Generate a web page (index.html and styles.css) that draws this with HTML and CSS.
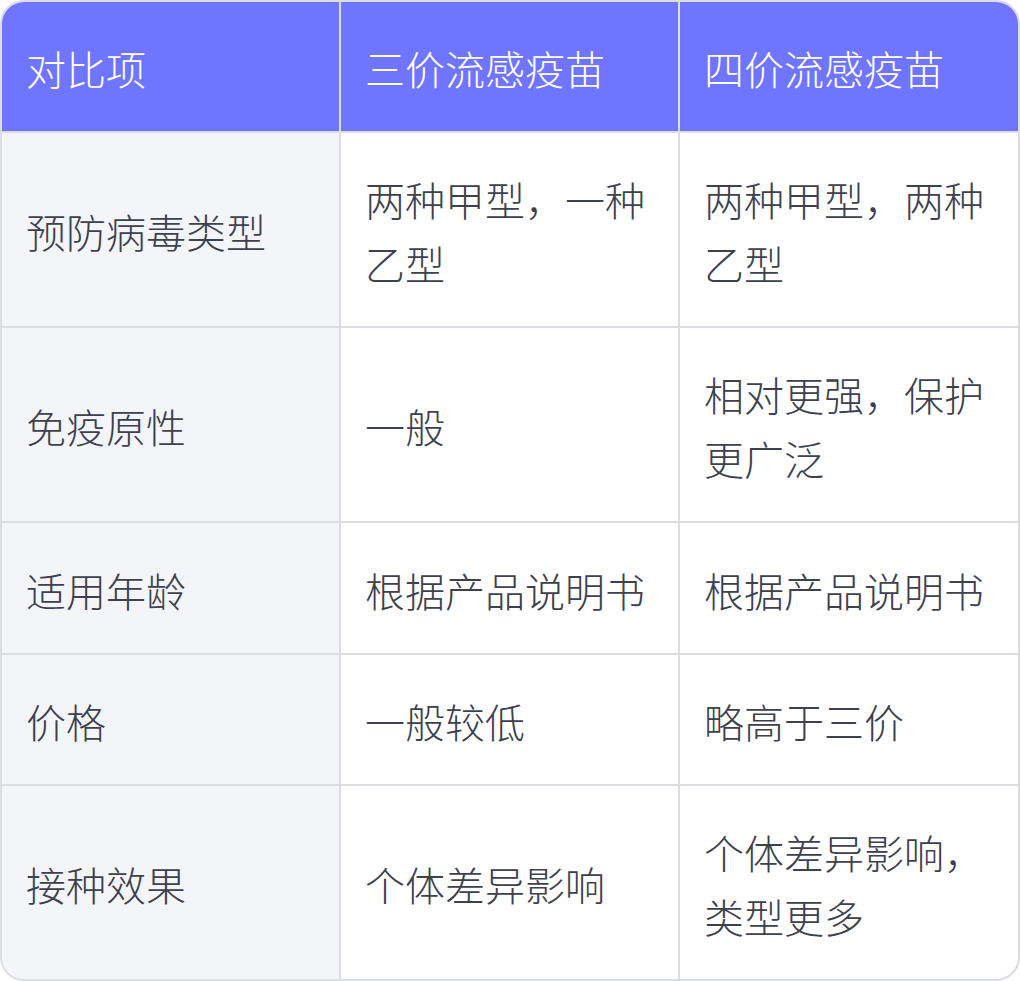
FILE: index.html
```html
<!DOCTYPE html>
<html lang="zh-CN">
<head>
<meta charset="utf-8">
<link rel="stylesheet" href="styles.css">
</head>
<body>
<div class="card">
  <table class="cmp">
    <thead>
      <tr><th>对比项</th><th>三价流感疫苗</th><th>四价流感疫苗</th></tr>
    </thead>
    <tbody>
      <tr><td>预防病毒类型</td><td>两种甲型，一种乙型</td><td>两种甲型，两种乙型</td></tr>
      <tr><td>免疫原性</td><td>一般</td><td>相对更强，保护更广泛</td></tr>
      <tr><td>适用年龄</td><td>根据产品说明书</td><td>根据产品说明书</td></tr>
      <tr><td>价格</td><td>一般较低</td><td>略高于三价</td></tr>
      <tr><td>接种效果</td><td>个体差异影响</td><td>个体差异影响，类型更多</td></tr>
    </tbody>
  </table>
</div>
</body>
</html>
```
FILE: styles.css
```css
html, body {
  margin: 0;
  padding: 0;
  background: #ffffff;
}
.card {
  width: 1020px;
  height: 981px;
  box-sizing: border-box;
  border: 2px solid #dcdde2;
  border-radius: 24px;
  overflow: hidden;
}
.cmp {
  width: 100%;
  height: 100%;
  border-collapse: separate;
  border-spacing: 0;
  table-layout: fixed;
  font-family: "Noto Sans CJK SC", "Noto Sans", sans-serif;
  font-size: 40px;
  font-weight: 300;
  line-height: 64px;
  color: #3d404d;
}
.cmp th, .cmp td {
  padding: 34px 24px 31px 24px;
  text-align: left;
  vertical-align: middle;
  font-weight: 300;
  border-right: 2px solid #dcdde2;
  border-bottom: 2px solid #dcdde2;
}
.cmp th:last-child, .cmp td:last-child {
  border-right: none;
}
.cmp tbody tr:last-child td {
  border-bottom: none;
}
.cmp th {
  background: #7075ff;
  color: #ffffff;
}
.cmp td:first-child {
  background: #f4f5f9;
}
.cmp th:nth-child(1), .cmp td:nth-child(1) { width: 339px; box-sizing: border-box; }
.cmp th:nth-child(2), .cmp td:nth-child(2) { width: 339px; box-sizing: border-box; }
```
